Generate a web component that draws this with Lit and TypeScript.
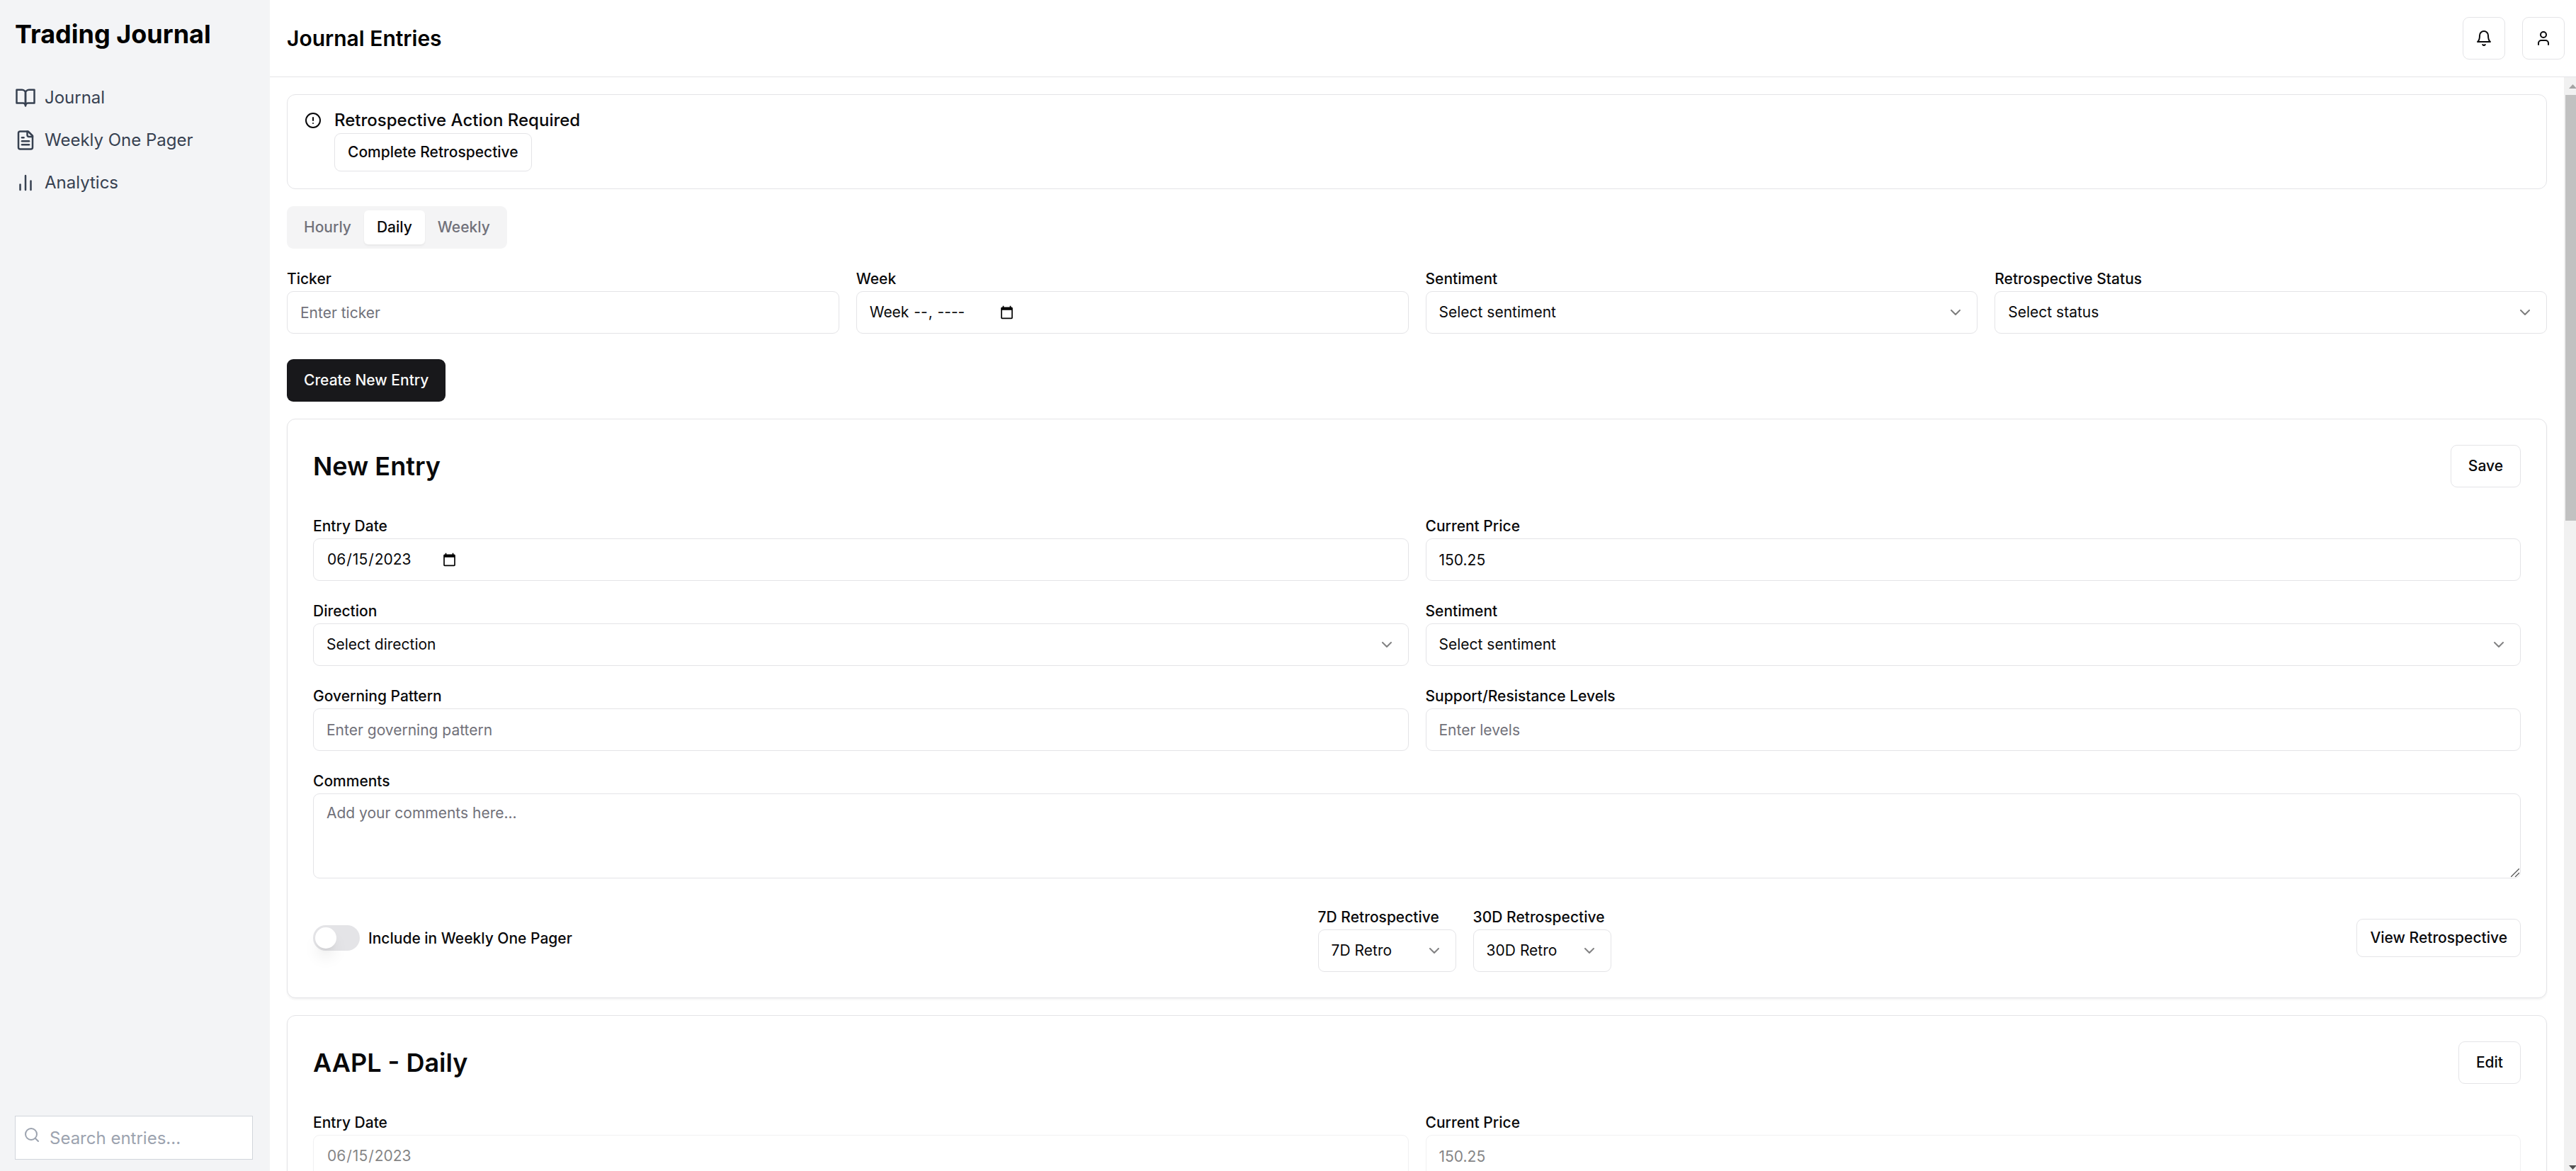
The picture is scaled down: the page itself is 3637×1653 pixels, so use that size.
import { LitElement, html, css, svg, nothing } from "lit";
import { customElement, property, state } from "lit/decorators.js";

const icon = (content: unknown, cls = "icon") => html`<svg
  class=${cls}
  viewBox="0 0 24 24"
  fill="none"
  stroke="currentColor"
  stroke-width="2"
  stroke-linecap="round"
  stroke-linejoin="round"
  aria-hidden="true"
>${content}</svg>`;

const bookOpen = svg`<path d="M2 3h6a4 4 0 0 1 4 4v14a3 3 0 0 0-3-3H2z"/><path d="M22 3h-6a4 4 0 0 0-4 4v14a3 3 0 0 1 3-3h7z"/>`;
const fileText = svg`<path d="M15 2H6a2 2 0 0 0-2 2v16a2 2 0 0 0 2 2h12a2 2 0 0 0 2-2V7Z"/><path d="M14 2v4a2 2 0 0 0 2 2h4"/><path d="M10 9H8"/><path d="M16 13H8"/><path d="M16 17H8"/>`;
const barChart = svg`<line x1="18" x2="18" y1="20" y2="10"/><line x1="12" x2="12" y1="20" y2="4"/><line x1="6" x2="6" y1="20" y2="14"/>`;
const search = svg`<circle cx="11" cy="11" r="8"/><path d="m21 21-4.3-4.3"/>`;
const bell = svg`<path d="M6 8a6 6 0 0 1 12 0c0 7 3 9 3 9H3s3-2 3-9"/><path d="M10.3 21a1.94 1.94 0 0 0 3.4 0"/>`;
const user = svg`<path d="M19 21v-2a4 4 0 0 0-4-4H9a4 4 0 0 0-4 4v2"/><circle cx="12" cy="7" r="4"/>`;
const alertCircle = svg`<circle cx="12" cy="12" r="10"/><line x1="12" x2="12" y1="8" y2="12"/><line x1="12" x2="12.01" y1="16" y2="16"/>`;
const chevronDown = svg`<path d="m6 9 6 6 6-6"/>`;

const controls = css`
  *,
  *::before,
  *::after {
    box-sizing: border-box;
  }
  h1,
  h2,
  h3 {
    margin: 0;
  }
  .icon {
    display: block;
    flex: none;
    width: 24px;
    height: 24px;
  }
  .button {
    display: inline-flex;
    align-items: center;
    justify-content: center;
    height: 60px;
    padding: 0 24px;
    border: 1px solid #e4e4e7;
    border-radius: 9px;
    background: #fff;
    color: #09090b;
    font: 500 21px/30px Inter, "Liberation Sans", sans-serif;
    white-space: nowrap;
    cursor: pointer;
  }
  .button.small {
    height: 54px;
    padding: 0 18px;
  }
  .button.square {
    width: 60px;
    padding: 0;
  }
  .button.primary {
    border: 0;
    background: #18181b;
    color: #fafafa;
  }
  .field {
    display: flex;
    flex-direction: column;
    min-width: 0;
  }
  .caption {
    height: 36px;
    font-size: 24px;
    line-height: 36px;
  }
  .label {
    color: #09090b;
    font-size: 21px;
    font-weight: 500;
    line-height: 21px;
    white-space: nowrap;
  }
  .control {
    display: flex;
    width: 100%;
    height: 60px;
    margin: 0;
    padding: 0 18px;
    border: 1px solid #e4e4e7;
    border-radius: 9px;
    background: #fff;
    color: #09090b;
    font: 400 21px/30px Inter, "Liberation Sans", sans-serif;
    appearance: none;
  }
  .control::placeholder {
    color: #71717a;
    opacity: 1;
  }
  .control::-webkit-datetime-edit {
    flex: none;
  }
  .control::-webkit-calendar-picker-indicator {
    margin-inline-start: 2px;
  }
  .control:disabled {
    opacity: 0.5;
  }
  .select {
    display: grid;
    align-items: center;
  }
  .select > * {
    grid-area: 1 / 1;
  }
  .select .icon {
    justify-self: end;
    margin-right: 19px;
    opacity: 0.5;
    pointer-events: none;
  }
`;

const inputField = (
  id: string,
  label: string,
  opts: { type?: string; value?: string; placeholder?: string; disabled?: boolean }
) => html`<div class="field">
  <div class="caption"><label class="label" for=${id}>${label}</label></div>
  <input
    class="control"
    id=${id}
    type=${opts.type ?? "text"}
    .value=${opts.value ?? ""}
    placeholder=${opts.placeholder ?? nothing}
    ?disabled=${opts.disabled ?? false}
  />
</div>`;

const selectField = (id: string, label: string, options: string[], disabled = false) => html`<div class="field">
  <div class="caption"><label class="label" for=${id}>${label}</label></div>
  <div class="select">
    <select class="control" id=${id} ?disabled=${disabled}>
      ${options.map((o) => html`<option>${o}</option>`)}
    </select>
    ${icon(chevronDown)}
  </div>
</div>`;

@customElement("entry-card")
export class EntryCard extends LitElement {
  @property() heading = "";
  @property({ type: Boolean }) editing = false;

  static styles = [
    controls,
    css`
      :host {
        display: block;
      }
      .card {
        display: flex;
        flex-direction: column;
        gap: 36px;
        padding: 36px;
        border: 1px solid #e4e4e7;
        border-radius: 12px;
        background: #fff;
        color: #09090b;
        box-shadow: 0 2px 3px rgba(0, 0, 0, 0.05);
      }
      .head {
        display: flex;
        align-items: center;
        justify-content: space-between;
      }
      .title {
        font-size: 36px;
        font-weight: 600;
        line-height: 36px;
      }
      .fields {
        display: grid;
        grid-template-columns: 1fr 1fr;
        gap: 24px;
      }
      .wide {
        grid-column: 1 / -1;
      }
      .area {
        display: grid;
      }
      .area > * {
        grid-area: 1 / 1;
      }
      .area .control {
        height: 120px;
        padding: 12px 18px;
        resize: none;
      }
      .grip {
        align-self: end;
        justify-self: end;
        width: 12px;
        height: 12px;
        margin: 2px;
        pointer-events: none;
      }
      .foot {
        display: flex;
        align-items: center;
        justify-content: space-between;
      }
      .toggle {
        display: flex;
        align-items: center;
        gap: 12px;
      }
      .switch {
        display: flex;
        align-items: center;
        width: 66px;
        height: 36px;
        margin: 0;
        padding: 3px;
        border-radius: 18px;
        background: #e4e4e7;
        appearance: none;
      }
      .switch::before {
        content: "";
        width: 30px;
        height: 30px;
        border-radius: 50%;
        background: #fff;
        box-shadow: 0 15px 22px -4px rgba(0, 0, 0, 0.1), 0 6px 9px -6px rgba(0, 0, 0, 0.1);
      }
      .switch:checked {
        justify-content: flex-end;
        background: #18181b;
      }
      .retros {
        display: grid;
        grid-template-columns: 195px 195px;
        gap: 24px;
      }
    `,
  ];

  render() {
    const off = !this.editing;
    return html`<section class="card">
      <div class="head">
        <h3 class="title">${this.heading}</h3>
        <button class="button" type="button" @click=${() => (this.editing = !this.editing)}>
          ${this.editing ? "Save" : "Edit"}
        </button>
      </div>
      <div class="fields">
        ${inputField("date", "Entry Date", { type: "date", value: "2023-06-15", disabled: off })}
        ${inputField("price", "Current Price", { value: "150.25", disabled: off })}
        ${selectField("direction", "Direction", ["Select direction", "Up", "Down"], off)}
        ${selectField("sentiment", "Sentiment", ["Select sentiment", "Bullish", "Bearish", "Neutral"], off)}
        ${inputField("pattern", "Governing Pattern", { placeholder: "Enter governing pattern", disabled: off })}
        ${inputField("levels", "Support/Resistance Levels", { placeholder: "Enter levels", disabled: off })}
        <div class="field wide">
          <div class="caption"><label class="label" for="comments">Comments</label></div>
          <div class="area">
            <textarea
              class="control"
              id="comments"
              placeholder="Add your comments here..."
              ?disabled=${off}
            ></textarea>
            <svg class="grip" viewBox="0 0 12 12" stroke="#555" stroke-width="1.3" aria-hidden="true">
              <path d="M0 12 12 0M6 12 12 6" />
            </svg>
          </div>
        </div>
      </div>
      <div class="foot">
        <div class="toggle">
          <input class="switch" id="include" type="checkbox" role="switch" ?disabled=${off} />
          <label class="label" for="include">Include in Weekly One Pager</label>
        </div>
        <div class="retros">
          ${selectField("retro7", "7D Retrospective", ["7D Retro", "Win", "Loss"], off)}
          ${selectField("retro30", "30D Retrospective", ["30D Retro", "Win", "Loss"], off)}
        </div>
        <button class="button small" type="button">View Retrospective</button>
      </div>
    </section>`;
  }
}

@customElement("app-root")
export class AppRoot extends LitElement {
  @state() private tab = "Daily";

  static styles = [
    controls,
    css`
      :host {
        display: block;
        background: #fff;
        color: #000;
        font-family: Inter, "Liberation Sans", sans-serif;
        font-size: 24px;
        line-height: 36px;
      }
      .shell {
        display: flex;
        height: 100vh;
        overflow: hidden;
      }
      .sidebar {
        display: flex;
        flex: none;
        flex-direction: column;
        width: 381px;
        padding: 24px 24px 16px 21px;
        background: #f3f4f6;
      }
      .brand {
        margin-bottom: 48px;
        font-size: 36px;
        font-weight: 700;
        line-height: 48px;
        white-space: nowrap;
      }
      .nav {
        display: flex;
        flex: 1;
        flex-direction: column;
        gap: 24px;
      }
      .link {
        display: flex;
        align-items: center;
        gap: 12px;
        color: #374151;
        text-decoration: none;
      }
      .link .icon {
        width: 30px;
        height: 30px;
      }
      .search {
        position: relative;
      }
      .search .icon {
        position: absolute;
        top: 15px;
        left: 12px;
        color: #9ca3af;
      }
      .search-input {
        display: block;
        width: 100%;
        height: 62px;
        margin: 0;
        padding: 12px 24px 12px 48px;
        border: 1px solid #d1d5db;
        border-radius: 0;
        background: #fff;
        color: #000;
        font: 400 24px/36px Inter, "Liberation Sans", sans-serif;
        appearance: none;
      }
      .search-input::placeholder {
        color: #9ca3af;
        opacity: 1;
      }
      .main {
        display: flex;
        flex: 1;
        flex-direction: column;
        min-width: 0;
      }
      .header {
        display: flex;
        flex: none;
        align-items: center;
        justify-content: space-between;
        padding: 24px 16px 24px 24px;
        border-bottom: 1px solid #e4e4e7;
      }
      .page-title {
        font-size: 30px;
        font-weight: 600;
        line-height: 42px;
      }
      .actions {
        display: flex;
        gap: 24px;
      }
      .body {
        display: flex;
        flex: 1;
        min-height: 0;
      }
      .content {
        display: flex;
        flex: 1;
        flex-direction: column;
        gap: 24px;
        min-width: 0;
        padding: 24px;
        overflow-y: auto;
        scrollbar-width: none;
      }
      .content > * {
        flex: none;
      }
      .alert {
        display: flex;
        gap: 18px;
        padding: 24px;
        border: 1px solid #e4e4e7;
        border-radius: 12px;
        color: #09090b;
      }
      .alert-body {
        display: flex;
        flex-direction: column;
        align-items: flex-start;
        gap: 6px;
      }
      .alert-title {
        font-size: 24px;
        font-weight: 500;
        line-height: 24px;
      }
      .tabs {
        display: flex;
        align-self: flex-start;
        padding: 6px;
        border-radius: 9px;
        background: #f4f4f5;
      }
      .tab {
        height: 48px;
        padding: 0 18px;
        border: 0;
        border-radius: 6px;
        background: none;
        color: #71717a;
        font: 500 21px/30px Inter, "Liberation Sans", sans-serif;
      }
      .tab[aria-selected="true"] {
        background: #fff;
        color: #09090b;
        box-shadow: 0 2px 3px rgba(0, 0, 0, 0.05);
      }
      .filters {
        display: grid;
        grid-template-columns: repeat(4, 1fr);
        gap: 24px;
        margin-bottom: 12px;
      }
      .create {
        align-self: flex-start;
      }
      .scrollbar {
        display: flex;
        flex: none;
        flex-direction: column;
        width: 17px;
        padding-left: 2px;
        overflow: hidden;
        background: #f1f1f1;
      }
      .arrow {
        display: block;
        flex: none;
        width: 21px;
        height: 25px;
        padding: 10px 5px 9px;
        fill: #a3a3a3;
      }
      .arrow.down {
        height: 17px;
        padding: 9px 5px 2px;
        fill: #505050;
      }
      .thumb {
        flex: 2;
        width: 21px;
        background: #c1c1c1;
      }
      .rest {
        flex: 3;
      }
    `,
  ];

  render() {
    const links = [
      { label: "Journal", glyph: bookOpen },
      { label: "Weekly One Pager", glyph: fileText },
      { label: "Analytics", glyph: barChart },
    ];
    return html`<div class="shell">
      <aside class="sidebar">
        <h1 class="brand">Trading Journal</h1>
        <nav class="nav">
          ${links.map((l) => html`<a class="link" href="#">${icon(l.glyph)}<span>${l.label}</span></a>`)}
        </nav>
        <div class="search">
          <input class="search-input" type="text" aria-label="Search entries" placeholder="Search entries..." />
          ${icon(search)}
        </div>
      </aside>
      <div class="main">
        <header class="header">
          <h2 class="page-title">Journal Entries</h2>
          <div class="actions">
            <button class="button square" type="button" aria-label="Notifications">${icon(bell)}</button>
            <button class="button square" type="button" aria-label="Account">${icon(user)}</button>
          </div>
        </header>
        <div class="body">
          <main class="content">
            <div class="alert" role="alert">
              ${icon(alertCircle)}
              <div class="alert-body">
                <div class="alert-title">Retrospective Action Required</div>
                <button class="button small" type="button">Complete Retrospective</button>
              </div>
            </div>
            <div class="tabs" role="tablist">
              ${["Hourly", "Daily", "Weekly"].map(
                (t) => html`<button
                  class="tab"
                  type="button"
                  role="tab"
                  aria-selected=${t === this.tab ? "true" : "false"}
                  @click=${() => (this.tab = t)}
                >${t}</button>`
              )}
            </div>
            <div class="filters">
              ${inputField("ticker", "Ticker", { placeholder: "Enter ticker" })}
              ${inputField("week", "Week", { type: "week" })}
              ${selectField("filter-sentiment", "Sentiment", ["Select sentiment", "Bullish", "Bearish", "Neutral"])}
              ${selectField("status", "Retrospective Status", ["Select status", "Complete", "Pending"])}
            </div>
            <button class="button primary create" type="button">Create New Entry</button>
            <entry-card heading="New Entry" editing></entry-card>
            <entry-card heading="AAPL - Daily"></entry-card>
          </main>
          <div class="scrollbar" aria-hidden="true">
            <svg class="arrow" viewBox="0 0 11 6"><path d="M5.500 0 11 6H0z" /></svg>
            <div class="thumb"></div>
            <div class="rest"></div>
            <svg class="arrow down" viewBox="0 0 11 6"><path d="M0 0H11L5.500 6z" /></svg>
          </div>
        </div>
      </div>
    </div>`;
  }
}
